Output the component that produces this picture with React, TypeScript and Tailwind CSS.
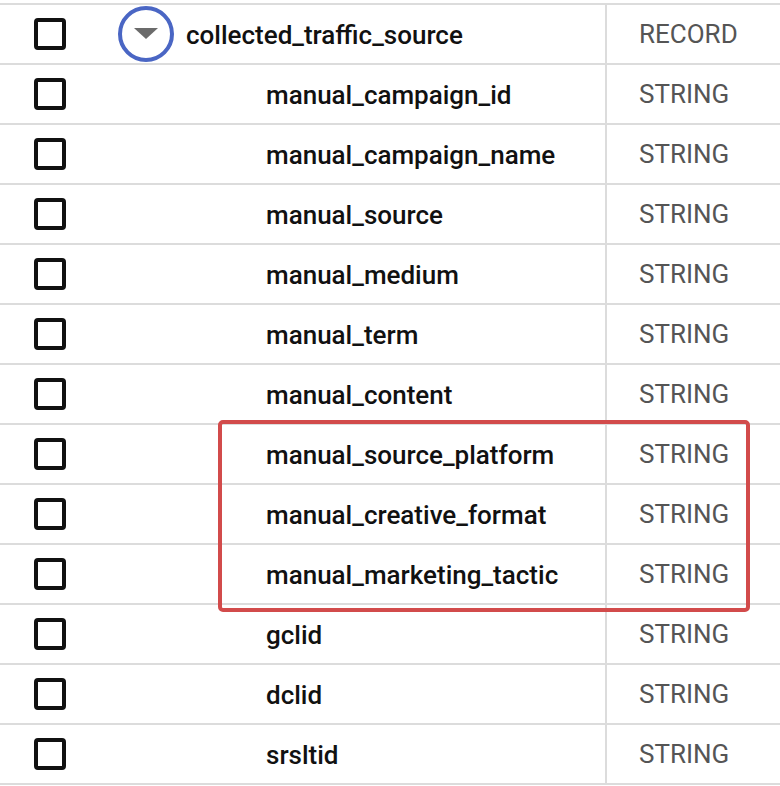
const children = [
  "manual_campaign_id",
  "manual_campaign_name",
  "manual_source",
  "manual_medium",
  "manual_term",
  "manual_content",
];
const highlighted = [
  "manual_source_platform",
  "manual_creative_format",
  "manual_marketing_tactic",
];
const tail = ["gclid", "dclid", "srsltid"];

const Checkbox = () => (
  <div className="ml-[34px] w-[32px] h-[32px] shrink-0 border-[4px] border-[#111] rounded-[4px] bg-white" />
);

const Row = ({
  name,
  type,
  parent,
}: {
  name: string;
  type: string;
  parent?: boolean;
}) => (
  <div className="flex h-[60px] border-b-2 border-[#dcdcdc]">
    <div className="flex items-center w-[605px] shrink-0">
      <Checkbox />
      {parent ? (
        <>
          <div className="ml-[52px] w-[56px] h-[56px] rounded-full border-[4px] border-[#4a66c4] flex items-center justify-center">
            <svg width="24" height="12" viewBox="0 0 24 12">
              <path d="M0 0 L24 0 L12 11 Z" fill="#6b6b6b" />
            </svg>
          </div>
          <span className="ml-[12px] pt-[2px] text-[26px] font-medium text-[#111]">
            {name}
          </span>
        </>
      ) : (
        <span className="ml-[200px] pt-[2px] text-[26px] font-medium text-[#111]">
          {name}
        </span>
      )}
    </div>
    <div className="flex items-center border-l-2 border-[#dcdcdc] pl-[32px] text-[26px] text-[#555] flex-1">
      {type}
    </div>
  </div>
);

export default function App() {
  return (
    <div
      className="w-[780px] h-[786px] bg-white overflow-hidden pt-[3px]"
      style={{ fontFamily: "Roboto, 'Liberation Sans', sans-serif" }}
    >
      <div className="border-t-2 border-[#dcdcdc]">
        <Row name="collected_traffic_source" type="RECORD" parent />
        {children.map((c) => (
          <Row key={c} name={c} type="STRING" />
        ))}
        <div className="relative">
          {highlighted.map((c) => (
            <Row key={c} name={c} type="STRING" />
          ))}
          <div className="absolute left-[218px] w-[532px] -top-[5px] h-[192px] border-[4px] border-[#d24b4b] rounded-[5px] pointer-events-none" />
        </div>
        {tail.map((c) => (
          <Row key={c} name={c} type="STRING" />
        ))}
      </div>
    </div>
  );
}
